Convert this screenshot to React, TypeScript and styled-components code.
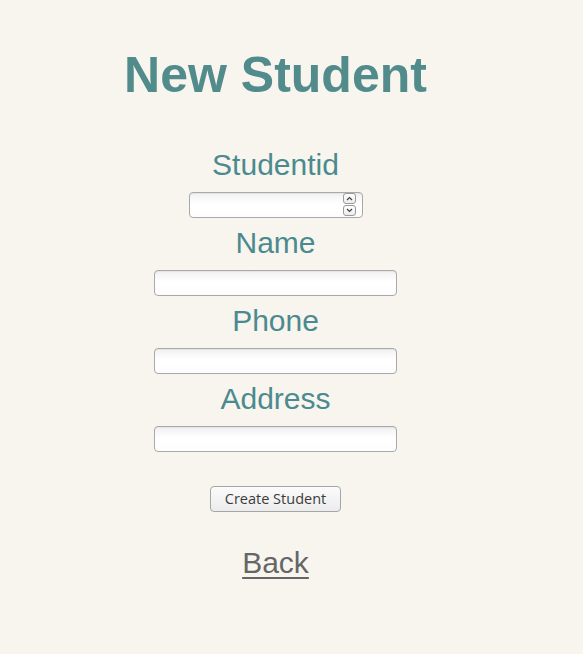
import React from "react";
import styled, { createGlobalStyle } from "styled-components";

const Global = createGlobalStyle`
  html, body { margin: 0; padding: 0; background: #f8f5ef; }
  body { font-family: "Liberation Sans", Arial, sans-serif; }
`;

const Page = styled.div`
  width: 551px;
  display: flex;
  flex-direction: column;
  align-items: center;
  padding-top: 47px;
`;

const Title = styled.h1`
  margin: 0 0 43px;
  font-size: 50px;
  line-height: 57.5px;
  font-weight: bold;
  color: #528b8b;
`;

const Form = styled.form`
  display: flex;
  flex-direction: column;
  align-items: center;
`;

const Field = styled.div`
  display: flex;
  flex-direction: column;
  align-items: center;
  margin-bottom: 8px;
`;

const Label = styled.label`
  font-size: 30px;
  line-height: 34px;
  color: #4b8a8e;
  margin-bottom: 10px;
`;

const inputLook = `
  box-sizing: border-box;
  height: 26px;
  border: 1px solid #a9a9a9;
  border-radius: 4px;
  background: linear-gradient(#f1f1f1, #ffffff 45%, #fdfdfd);
  box-shadow: inset 0 1px 1px rgba(0,0,0,0.06);
`;

const TextInput = styled.input`
  ${inputLook}
  width: 243px;
  padding: 0 6px;
  font: 14px "Liberation Sans", sans-serif;
  outline: none;
`;

const NumberBox = styled.div`
  ${inputLook}
  width: 174px;
  display: flex;
  align-items: center;
  padding: 0 6px 0 6px;
`;

const BareInput = styled.input`
  flex: 1;
  min-width: 0;
  border: 0;
  background: transparent;
  outline: none;
  font: 14px "Liberation Sans", sans-serif;
  padding: 0;
`;

const Spin = styled.div`
  display: flex;
  flex-direction: column;
  gap: 1px;
`;

const SpinBtn = styled.div`
  box-sizing: border-box;
  width: 13px;
  height: 11px;
  border: 1px solid #9a9a9a;
  border-radius: 3px;
  background: linear-gradient(#ffffff, #ececec);
  display: flex;
  align-items: center;
  justify-content: center;
`;

const ButtonRow = styled.div`
  margin-top: 26px;
`;

const Button = styled.button`
  box-sizing: border-box;
  width: 131px;
  height: 26px;
  border: 1px solid #a6a6a6;
  border-radius: 4px;
  background: linear-gradient(#fbfbfb, #ececec);
  color: #3c3c3c;
  font: 14.5px "Open Sans", "DejaVu Sans", sans-serif;
  padding: 0;
`;

const BackLink = styled.a`
  margin-top: 34px;
  font-size: 30px;
  line-height: 34px;
  color: #666666;
  text-decoration: underline;
  text-underline-offset: 4px;
  text-decoration-thickness: 2px;
`;

const Chevron = ({ up }: { up?: boolean }) => (
  <svg width="7" height="5" viewBox="0 0 7 5">
    <path
      d={up ? "M1 4 L3.5 1.5 L6 4" : "M1 1 L3.5 3.5 L6 1"}
      fill="none"
      stroke="#444"
      strokeWidth="1.2"
    />
  </svg>
);

export default function App() {
  return (
    <>
      <Global />
      <Page>
        <Title>New Student</Title>
        <Form onSubmit={(e) => e.preventDefault()}>
          <Field>
            <Label htmlFor="sid">Studentid</Label>
            <NumberBox>
              <BareInput id="sid" type="text" inputMode="numeric" />
              <Spin>
                <SpinBtn>
                  <Chevron up />
                </SpinBtn>
                <SpinBtn>
                  <Chevron />
                </SpinBtn>
              </Spin>
            </NumberBox>
          </Field>
          <Field>
            <Label htmlFor="name">Name</Label>
            <TextInput id="name" type="text" />
          </Field>
          <Field>
            <Label htmlFor="phone">Phone</Label>
            <TextInput id="phone" type="text" />
          </Field>
          <Field>
            <Label htmlFor="address">Address</Label>
            <TextInput id="address" type="text" />
          </Field>
          <ButtonRow>
            <Button type="submit">Create Student</Button>
          </ButtonRow>
        </Form>
        <BackLink href="#">Back</BackLink>
      </Page>
    </>
  );
}
